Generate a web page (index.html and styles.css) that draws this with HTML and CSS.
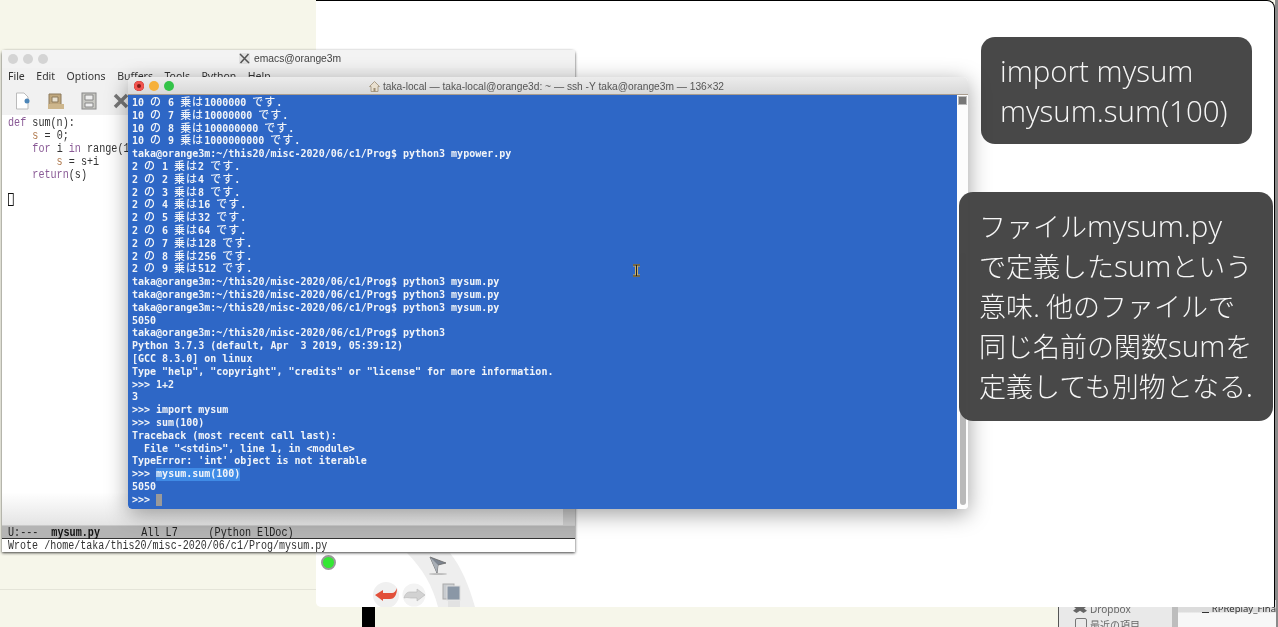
FILE: index.html
```html
<!DOCTYPE html>
<html lang="ja">
<head>
<meta charset="utf-8">
<title>emacs and terminal</title>
<link rel="stylesheet" href="styles.css">
</head>
<body>
<div class="desktop">
  <div class="rule"></div>
  <div class="black-post"></div>
  <div class="right-strip"></div>

  <div class="finder">
    <div class="finder-side">
      <div class="finder-row">
        <svg width="14" height="10" viewBox="0 0 14 10"><path d="M3.5 0 7 2.2 10.500 0 14 2.300 11 4.500 14 6.700 10.500 9 7 6.800 3.500 9 0 6.700 3 4.500 0 2.300Z" fill="#666"/></svg>
        <span>Dropbox</span>
      </div>
      <div class="finder-row">
        <span class="finder-box"></span>
        <span>最近の項目</span>
      </div>
    </div>
    <div class="finder-split"></div>
    <div class="finder-main">
      <div class="finder-file"><span class="finder-check"></span><span>RPReplay_Fina</span></div>
    </div>
  </div>

  <div class="slide">
    <div class="slide-dot"></div>
    <svg class="slide-tools" width="170" height="54" viewBox="0 0 170 54">
      <path d="M91 0C107 16 117 34 122 54H159C153 33 146 15 134 0Z" fill="#eeeeee"/>
      <path d="M114 4 130 10 122 12 121 20Z" fill="#7d8590" stroke="#666" stroke-width=".8"/>
      <path d="M114 4 122 12 121 20Z" fill="#a9afb6"/>
      <ellipse cx="122" cy="21" rx="9" ry="1" fill="#bdbdbd"/>
      <rect x="127" y="31" width="11" height="15" fill="#c9ccd0" stroke="#aaa"/>
      <rect x="131" y="33" width="13" height="14" fill="#8a97a6" stroke="#dedede"/>
      <rect x="132" y="48" width="12" height="6" fill="#e2e2e2"/>
      <circle cx="70" cy="42" r="13" fill="#f0f0f0"/>
      <circle cx="98" cy="42" r="11.500" fill="#f3f3f3"/>
      <path d="M59 42 67 37V40H76C78 40 80 38 81 35 81 41 79 46 74 46H67V48Z" fill="#e2503a"/>
      <path d="M109 42 101 36V39H94C91 39 89 41 88 45 91 44 93 45 95 45H101V48Z" fill="#d2d2d2" stroke="#b5b5b5" stroke-width=".6"/>
    </svg>
    <div class="note note-short"><span class="lat">import mysum</span><br><span class="lat">mysum.sum(100)</span></div>
  </div>

  <section class="emacs">
    <header class="emacs-title">
      <div class="lights">
        <span class="light light-off"></span><span class="light light-off"></span><span class="light light-off"></span>
      </div>
      <div class="emacs-name">
        <svg width="11" height="11" viewBox="0 0 11 11"><rect width="11" height="11" fill="#e2e2e2"/><path d="M1 1 10 10M9.500 1 1.500 10" stroke="#555" stroke-width="1.500"/></svg>
        <span>emacs@orange3m</span>
      </div>
    </header>
    <nav class="emacs-menu">
      <span>File</span><span>Edit</span><span>Options</span><span>Buffers</span><span>Tools</span><span>Python</span><span>Help</span>
    </nav>
    <div class="emacs-tools">
      <svg width="16" height="18" viewBox="0 0 16 18"><path d="M1.500 1H9L13 5V17H1.500Z" fill="#fff" stroke="#bbb"/><circle cx="12" cy="9" r="2.500" fill="#4d86b8"/></svg>
      <svg width="18" height="18" viewBox="0 0 18 18"><path d="M2 2H14V15H2Z" fill="#bfa77d" stroke="#8d7b5c"/><path d="M5 5H11V10H5Z" fill="#e9e2d2" stroke="#8d7b5c"/><path d="M1 12H17V17H1Z" fill="#cdb68c"/></svg>
      <svg width="16" height="18" viewBox="0 0 16 18"><rect x="1" y="1" width="14" height="16" fill="#c7c7c2" stroke="#888"/><path d="M4 3H12V8H4ZM4 11H12V15H4Z" fill="#eee" stroke="#888"/></svg>
      <svg width="16" height="18" viewBox="0 0 16 18"><path d="M2 3 14 15M14 3 2 15" stroke="#777" stroke-width="3.500"/></svg>
    </div>
    <div class="emacs-body">
      <div class="emacs-buffer">
        <div class="code"><div class="code-line"><span class="kw">def</span> sum(n):</div><div class="code-line">    <span class="var">s</span> = 0;</div><div class="code-line">    <span class="kw">for</span> i <span class="kw">in</span> range(1</div><div class="code-line">        <span class="var">s</span> = s+i</div><div class="code-line">    <span class="kw">return</span>(s)</div><div class="code-line"> </div><div class="code-line"><span class="emacs-cursor"></span></div></div>
      </div>
      <div class="emacs-scroll"></div>
    </div>
    <div class="modeline"><div class="mode-inner"><span>U:---</span><b>mysum.py</b><span class="mode-pos">All L7</span><span class="mode-name">(Python ElDoc)</span></div></div>
    <div class="echo"><div class="echo-inner">Wrote /home/taka/this20/misc-2020/06/c1/Prog/mysum.py</div></div>
  </section>

  <section class="term">
    <header class="term-title">
      <div class="lights">
        <span class="light light-red"></span><span class="light light-amber"></span><span class="light light-green"></span>
      </div>
      <div class="term-name">
        <svg width="11" height="11" viewBox="0 0 11 11"><path d="M5.500 .5 0.500 5.500H2V10.500H9V5.500H10.500Z" fill="#e8dfcf" stroke="#9c8d75" stroke-width=".8"/><rect x="4.500" y="7" width="2" height="3.500" fill="#9c8d75"/></svg>
        <span>taka-local — taka-local@orange3d: ~ — ssh -Y taka@orange3m — 136×32</span>
      </div>
    </header>
    <div class="term-body">
      <div class="screen">
        <div class="tl">10 <span class="j">の</span> 6 <span class="j">乗は</span>1000000 <span class="j">です</span>.</div>
        <div class="tl">10 <span class="j">の</span> 7 <span class="j">乗は</span>10000000 <span class="j">です</span>.</div>
        <div class="tl">10 <span class="j">の</span> 8 <span class="j">乗は</span>100000000 <span class="j">です</span>.</div>
        <div class="tl">10 <span class="j">の</span> 9 <span class="j">乗は</span>1000000000 <span class="j">です</span>.</div>
        <div class="tl">taka@orange3m:~/this20/misc-2020/06/c1/Prog$ python3 mypower.py</div>
        <div class="tl">2 <span class="j">の</span> 1 <span class="j">乗は</span>2 <span class="j">です</span>.</div>
        <div class="tl">2 <span class="j">の</span> 2 <span class="j">乗は</span>4 <span class="j">です</span>.</div>
        <div class="tl">2 <span class="j">の</span> 3 <span class="j">乗は</span>8 <span class="j">です</span>.</div>
        <div class="tl">2 <span class="j">の</span> 4 <span class="j">乗は</span>16 <span class="j">です</span>.</div>
        <div class="tl">2 <span class="j">の</span> 5 <span class="j">乗は</span>32 <span class="j">です</span>.</div>
        <div class="tl">2 <span class="j">の</span> 6 <span class="j">乗は</span>64 <span class="j">です</span>.</div>
        <div class="tl">2 <span class="j">の</span> 7 <span class="j">乗は</span>128 <span class="j">です</span>.</div>
        <div class="tl">2 <span class="j">の</span> 8 <span class="j">乗は</span>256 <span class="j">です</span>.</div>
        <div class="tl">2 <span class="j">の</span> 9 <span class="j">乗は</span>512 <span class="j">です</span>.</div>
        <div class="tl">taka@orange3m:~/this20/misc-2020/06/c1/Prog$ python3 mysum.py</div>
        <div class="tl">taka@orange3m:~/this20/misc-2020/06/c1/Prog$ python3 mysum.py</div>
        <div class="tl">taka@orange3m:~/this20/misc-2020/06/c1/Prog$ python3 mysum.py</div>
        <div class="tl">5050</div>
        <div class="tl">taka@orange3m:~/this20/misc-2020/06/c1/Prog$ python3</div>
        <div class="tl">Python 3.7.3 (default, Apr  3 2019, 05:39:12)</div>
        <div class="tl">[GCC 8.3.0] on linux</div>
        <div class="tl">Type "help", "copyright", "credits" or "license" for more information.</div>
        <div class="tl">&gt;&gt;&gt; 1+2</div>
        <div class="tl">3</div>
        <div class="tl">&gt;&gt;&gt; import mysum</div>
        <div class="tl">&gt;&gt;&gt; sum(100)</div>
        <div class="tl">Traceback (most recent call last):</div>
        <div class="tl">  File "&lt;stdin&gt;", line 1, in &lt;module&gt;</div>
        <div class="tl">TypeError: 'int' object is not iterable</div>
        <div class="tl">&gt;&gt;&gt; <span class="sel">mysum.sum(100)</span></div>
        <div class="tl">5050</div>
        <div class="tl">&gt;&gt;&gt; <span class="term-cursor"></span></div>
        <svg class="ibeam" width="9" height="13" viewBox="0 0 9 13"><path d="M1 1H8M1 12H8M4.500 1V12" fill="none" stroke="#c9b06a" stroke-width="3"/><path d="M1 1H8M1 12H8M4.500 1V12" fill="none" stroke="#222" stroke-width="1"/></svg>
      </div>
      <aside class="term-scroll">
        <span class="split-box"></span>
        <span class="term-thumb"></span>
      </aside>
    </div>
  </section>

  <div class="note note-long">ファイル<span class="lat">mysum.py</span><br>で定義した<span class="lat">sum</span>という<br>意味<span class="lat">.</span> 他のファイルで<br>同じ名前の関数<span class="lat">sum</span>を<br>定義しても別物となる.</div>
</div>
</body>
</html>
```

FILE: styles.css
```css
html, body {
  margin: 0;
  padding: 0;
  overflow: hidden;
  background: #f6f6ea;
}

.desktop {
  position: relative;
  width: 1278px;
  height: 627px;
  overflow: hidden;
  background: #f6f6ea;
  filter: blur(0.35px);
  font-family: "Noto Sans", "Noto Sans CJK JP", sans-serif;
}

.rule {
  position: absolute;
  left: 0;
  top: 589px;
  width: 320px;
  height: 1px;
  background: #e4e4d8;
}

.black-post {
  position: absolute;
  left: 362px;
  top: 600px;
  width: 13px;
  height: 27px;
  background: #000;
}

.right-strip {
  position: absolute;
  right: 0;
  top: 0;
  width: 3px;
  height: 627px;
  background: #8a8a8a;
}

.finder {
  position: absolute;
  left: 1058px;
  top: 600px;
  width: 218px;
  height: 27px;
  display: flex;
  border-left: 1px solid #555;
  box-sizing: border-box;
  background: #fff;
}

.finder-side {
  width: 113px;
  padding: 1px 0 0 14px;
  background: #e9e9e9;
  font-size: 10px;
  color: #666;
  box-sizing: border-box;
  overflow: hidden;
}

.finder-row {
  height: 15.500px;
  display: flex;
  align-items: center;
  gap: 3px;
}

.finder-box {
  width: 10px;
  height: 10px;
  border: 1px solid #777;
  border-radius: 2px;
  margin-left: 2px;
}

.finder-split {
  width: 6px;
  background: #bdbdbd;
}

.finder-main {
  flex: 1;
  background: linear-gradient(#dcdcdc 0, #dcdcdc 12px, #f7f7f7 13px);
  font-size: 9.5px;
  color: #333;
  padding: 0 0 0 24px;
  box-sizing: border-box;
  white-space: nowrap;
  overflow: hidden;
}

.finder-file {
  display: flex;
  align-items: center;
  gap: 3px;
  height: 12px;
  margin-top: 2px;
}

.finder-check {
  width: 11px;
  height: 1px;
  background: #333;
  margin-top: 8px;
}

.slide {
  position: absolute;
  left: 316px;
  top: 0;
  width: 959px;
  height: 607px;
  background: #fff;
  border-top: 1px solid #000;
  border-right: 1px solid #000;
  box-sizing: border-box;
  border-radius: 0 8px 0 5px;
}

.slide-dot {
  position: absolute;
  left: 5px;
  top: 554px;
  width: 11px;
  height: 11px;
  border-radius: 50%;
  background: #33e833;
  border: 2px solid #999;
}

.slide-tools {
  position: absolute;
  left: 0;
  top: 552px;
}

.note {
  position: absolute;
  background: #484848;
  color: #f7f7f7;
  font-family: "Noto Sans CJK JP", sans-serif;
  font-weight: 300;
  font-size: 27px;
  line-height: 40px;
  white-space: nowrap;
  border-radius: 14px;
  box-sizing: border-box;
}

.lat {
  font-family: "Open Sans", sans-serif;
  font-size: 29.500px;
  line-height: 0;
}

.note-short {
  left: 665px;
  top: 36px;
  width: 271px;
  height: 107px;
  padding: 14px 0 0 19px;
}

.note-long {
  left: 959px;
  top: 192px;
  width: 314px;
  height: 229px;
  padding: 14px 0 0 20px;
  background: rgba(68, 68, 68, 0.98);
}

.lights {
  display: flex;
  gap: 5px;
}

.light {
  width: 10px;
  height: 10px;
  border-radius: 50%;
}

.light-off { background: #d4d4d4; }
.light-red { background: #f2544e; box-shadow: inset 0 0 0 3px #f2544e, inset 0 0 0 5px #7e1a16; }
.light-amber { background: #f6b03a; }
.light-green { background: #33c348; }

.emacs {
  position: absolute;
  left: 2px;
  top: 50px;
  width: 573px;
  height: 502px;
  display: flex;
  flex-direction: column;
  background: #f3f3f3;
  border-radius: 4px 4px 0 0;
  box-shadow: 0 1px 3px rgba(0, 0, 0, .75);
  color: #333;
}

.emacs-title {
  height: 18px;
  position: relative;
  display: flex;
  align-items: center;
  padding-left: 6px;
  background: #f3f3f3;
  flex: none;
}

.emacs-name {
  position: absolute;
  left: 237px;
  top: 3px;
  display: flex;
  align-items: center;
  gap: 4px;
  font-family: "Liberation Sans", sans-serif;
  font-size: 10.300px;
  color: #444;
}

.emacs-menu {
  height: 18px;
  flex: none;
  display: flex;
  align-items: center;
  box-sizing: border-box;
  padding: 0 0 2px 6px;
  gap: 11.500px;
  font-size: 10.500px;
  color: #333;
  background: #f1f1f1;
}

.emacs-tools {
  height: 29px;
  flex: none;
  display: flex;
  align-items: center;
  padding-left: 13px;
  gap: 16px;
  background: #f1f1f1;
}

.emacs-body {
  flex: 1;
  display: flex;
  min-height: 0;
  background: #fff;
}

.emacs-buffer {
  flex: 1;
  padding: 2px 0 0 6px;
  background: linear-gradient(#fff 0, #fff 92%, #e4e4e4 100%);
}

.code {
  font-family: "Liberation Mono", monospace;
  font-size: 12.500px;
  color: #333;
  white-space: pre;
  transform: scaleX(.81);
  transform-origin: left top;
}

.code-line {
  height: 12.900px;
  line-height: 13px;
}

.kw { color: #8a5a96; }
.var { color: #b07a4e; }

.emacs-cursor {
  display: inline-block;
  width: 7px;
  height: 13px;
  margin-top: -1px;
  border: 1px solid #111;
  box-sizing: border-box;
  vertical-align: top;
}

.emacs-scroll {
  width: 12px;
  background: #cfcfcf;
}

.modeline {
  height: 11px;
  flex: none;
  padding: 1px 0 0 6px;
  background: #b4b4b4;
  border-top: 1px solid #c9c9c9;
  border-bottom: 1px solid #333;
  font-family: "Liberation Mono", monospace;
  font-size: 12.500px;
  line-height: 12px;
  color: #222;
  white-space: pre;
}

.mode-inner {
  display: flex;
  transform: scaleX(.81);
  transform-origin: left top;
}

.modeline b { margin-left: 16px; color: #111; }
.mode-pos { margin-left: 51px; }
.mode-name { margin-left: 38px; }

.echo {
  height: 12px;
  flex: none;
  padding: 1px 0 0 6px;
  background: #fff;
  font-family: "Liberation Mono", monospace;
  font-size: 12.500px;
  line-height: 13px;
  color: #333;
  white-space: pre;
  overflow: hidden;
}

.echo-inner {
  transform: scaleX(.803);
  transform-origin: left top;
}

.term {
  position: absolute;
  left: 128px;
  top: 77px;
  width: 840px;
  height: 432px;
  display: flex;
  flex-direction: column;
  border-radius: 5px 5px 4px 4px;
  background: #fff;
  box-shadow: 0 5px 22px rgba(0, 0, 0, .38);
  overflow: hidden;
}

.term-title {
  height: 18px;
  flex: none;
  position: relative;
  display: flex;
  align-items: center;
  padding-left: 6px;
  background: linear-gradient(#ececec, #d8d8d8);
  border-bottom: 1px solid #a89c8e;
  box-sizing: border-box;
}

.term-name {
  position: absolute;
  left: 241px;
  top: 4px;
  display: flex;
  align-items: center;
  gap: 3px;
  font-family: "Liberation Sans", sans-serif;
  font-size: 10.200px;
  color: #555;
  white-space: nowrap;
}

.term-body {
  flex: 1;
  display: flex;
  min-height: 0;
}

.screen {
  position: relative;
  flex: 1;
  padding: 2px 0 0 4px;
  background: #2e67c6;
  color: #f1f4f8;
  font-family: "DejaVu Sans Mono", "Noto Sans CJK JP", monospace;
  font-weight: bold;
  font-size: 10px;
  border-radius: 0 0 0 4px;
}

.tl {
  height: 12.800px;
  line-height: 12.800px;
  white-space: pre;
}

.j {
  font-family: "Noto Sans CJK JP", sans-serif;
  font-size: 11px;
  letter-spacing: 1px;
  font-weight: 500;
  line-height: 0;
}

.sel {
  display: inline-block;
  height: 12.800px;
  background: #3f8be6;
}

.term-cursor {
  display: inline-block;
  width: 6px;
  height: 12px;
  background: #9a9a9a;
  vertical-align: top;
}

.ibeam {
  position: absolute;
  left: 504px;
  top: 169px;
}

.term-scroll {
  position: relative;
  width: 11px;
  background: #fdfdfd;
  display: flex;
  flex-direction: column;
  align-items: center;
  padding-top: 1px;
  box-sizing: border-box;
}

.split-box {
  width: 7px;
  height: 7px;
  background: #777;
  border: 1px solid #bbb;
}

.term-thumb {
  position: absolute;
  left: 3px;
  top: 158px;
  width: 6px;
  height: 252px;
  background: #b9b9b9;
  border-radius: 3px;
}
```
